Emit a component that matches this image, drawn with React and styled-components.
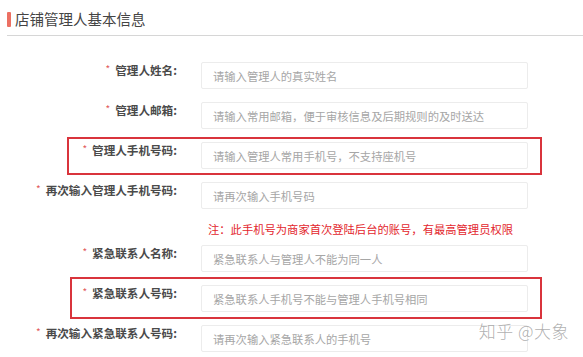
import React from "react";
import styled, { createGlobalStyle } from "styled-components";

const GlobalStyle = createGlobalStyle`
  html, body {
    margin: 0;
    padding: 0;
    background: #fff;
  }
  body {
    font-family: "Noto Sans CJK SC", "Noto Sans", sans-serif;
    color: #333;
  }
`;

const Page = styled.div`
  position: relative;
  width: 583px;
  height: 357px;
  overflow: hidden;
  background: #fff;
`;

const Header = styled.div`
  display: flex;
  align-items: center;
  gap: 4px;
  margin-left: 7px;
  padding: 9px 0 6px;
  border-bottom: 1px solid #d6d6d6;
`;

const Bar = styled.span`
  width: 4px;
  height: 15px;
  background: #ec7063;
  border-radius: 1px;
`;

const Title = styled.h2`
  margin: 0;
  font-size: 14.5px;
  line-height: 20px;
  font-weight: 400;
  color: #444;
`;

const Form = styled.div`
  display: flex;
  flex-direction: column;
  padding-top: 13px;
`;

const Row = styled.div`
  position: relative;
  display: grid;
  grid-template-columns: 177px 327px;
  column-gap: 24px;
  align-items: start;
  margin-top: 13px;

  &::after {
    content: "";
    display: ${(p) => (p.$mark ? "block" : "none")};
    position: absolute;
    left: ${(p) => p.$mark?.left}px;
    top: ${(p) => p.$mark?.top}px;
    bottom: ${(p) => p.$mark?.bottom}px;
    width: ${(p) => 542 - (p.$mark?.left || 0)}px;
    border: 2.5px solid #d9343c;
    box-sizing: border-box;
    pointer-events: none;
  }
`;

const Label = styled.label`
  display: flex;
  justify-content: flex-end;
  align-items: center;
  gap: 5px;
  font-size: 11.6px;
  line-height: 17px;
  font-weight: 700;
  color: #4a4a4a;
  white-space: nowrap;
`;

const Star = styled.span`
  color: #e25b5b;
  font-size: 10px;
  font-weight: 400;
  position: relative;
  top: -2px;
`;

const Input = styled.input`
  width: 327px;
  height: 27px;
  box-sizing: border-box;
  border: 1px solid #ececec;
  border-radius: 2px;
  padding: 0 11px;
  font-family: inherit;
  font-size: 11.3px;
  color: #333;
  outline: none;
  background: #fff;

  &::placeholder {
    color: #a6a6a6;
  }
`;

const Note = styled.p`
  margin: 13px 0 -4px 208px;
  font-size: 11.3px;
  line-height: 14px;
  color: #e3262d;
  white-space: nowrap;
`;

const Watermark = styled.div`
  position: absolute;
  right: 14px;
  top: 321px;
  font-size: 17px;
  line-height: 20px;
  font-weight: 300;
  color: rgba(140, 140, 140, 0.7);
  letter-spacing: 0.5px;
`;

const fields = [
  { label: "管理人姓名", placeholder: "请输入管理人的真实姓名" },
  { label: "管理人邮箱", placeholder: "请输入常用邮箱，便于审核信息及后期规则的及时送达" },
  {
    label: "管理人手机号码",
    placeholder: "请输入管理人常用手机号，不支持座机号",
    mark: { left: 67, top: -5, bottom: -6 },
  },
  { label: "再次输入管理人手机号码", placeholder: "请再次输入手机号码", note: true },
  { label: "紧急联系人名称", placeholder: "紧急联系人与管理人不能为同一人" },
  {
    label: "紧急联系人号码",
    placeholder: "紧急联系人手机号不能与管理人手机号相同",
    mark: { left: 70, top: -8, bottom: -7 },
  },
  { label: "再次输入紧急联系人号码", placeholder: "请再次输入紧急联系人的手机号" },
];

export default function App() {
  return (
    <>
      <GlobalStyle />
      <Page>
        <Header>
          <Bar />
          <Title>店铺管理人基本信息</Title>
        </Header>
        <Form>
          {fields.map((f) => (
            <React.Fragment key={f.label}>
              <Row $mark={f.mark}>
                <Label>
                  <Star>*</Star>
                  {f.label}:
                </Label>
                <Input placeholder={f.placeholder} />
              </Row>
              {f.note && (
                <Note>注：此手机号为商家首次登陆后台的账号，有最高管理员权限</Note>
              )}
            </React.Fragment>
          ))}
        </Form>
        <Watermark>知乎 @大象</Watermark>
      </Page>
    </>
  );
}
